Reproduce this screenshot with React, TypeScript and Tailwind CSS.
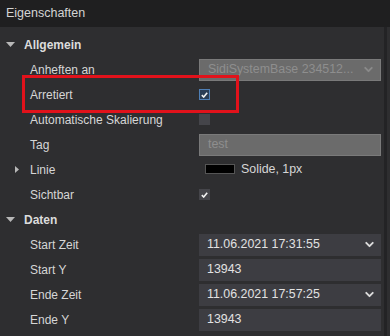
import { ChevronDown } from "lucide-react";
import type { ReactNode } from "react";

const font = { fontFamily: '"Liberation Sans", Arial, sans-serif' };

const Row = ({ label, indent = true, children }: { label: ReactNode; indent?: boolean; children?: ReactNode }) => (
  <div className="flex h-[25px] items-center">
    <div className={`w-[199px] shrink-0 text-[12px] text-[#d6d6d6] ${indent ? "pl-[30px]" : ""}`}>{label}</div>
    <div className="flex w-[182px] items-center">{children}</div>
  </div>
);

const Group = ({ label }: { label: string }) => (
  <div className="flex h-[25px] items-center pl-[6px]">
    <svg width="9" height="5" viewBox="0 0 9 5" className="mr-[9px]">
      <path d="M0 0h9L4.5 5z" fill="#b8b8b8" />
    </svg>
    <span className="text-[12px] font-bold text-[#dcdcdc]">{label}</span>
  </div>
);

const Check = ({ checked, blue }: { checked?: boolean; blue?: boolean }) => (
  <div
    className={`flex h-[11px] w-[11px] items-center justify-center ${
      blue ? "border border-[#4f7fb5] bg-[#2b3d55]" : "bg-[#45454a]"
    }`}
  >
    {checked && (
      <svg width="7" height="6" viewBox="0 0 7 6">
        <path d="M0.8 3.2L2.7 5L6.2 0.8" stroke="#f2f2f2" strokeWidth="1.6" fill="none" />
      </svg>
    )}
  </div>
);

const Field = ({ text, dropdown, disabled }: { text: string; dropdown?: boolean; disabled?: boolean }) => (
  <div
    className={`flex h-[22px] w-full items-center justify-between pl-[8px] pr-[5px] text-[12.4px] ${
      disabled ? "border border-[#7a7a7a] bg-[#6b6b6b] text-[#8e8e8e]" : "bg-[#3d3d42] text-[#e2e2e2]"
    }`}
  >
    <span>{text}</span>
    {dropdown && <ChevronDown size={13} strokeWidth={3.5} color={disabled ? "#8a8a8a" : "#dcdcdc"} />}
  </div>
);

export default function App() {
  return (
    <div style={font} className="relative h-[336px] w-[390px] overflow-hidden bg-[#2e2e30]">
      <div className="flex h-[27px] items-center bg-[#1f1f20] pl-[6px] text-[12.5px] text-[#d4d4d4]">Eigenschaften</div>
      <div className="flex">
        <div className="w-[384px] pt-[5px]">
          <Group label="Allgemein" />
          <Row label="Anheften an">
            <Field text="SidiSystemBase 234512..." dropdown disabled />
          </Row>
          <Row label="Arretiert">
            <Check checked blue />
          </Row>
          <Row label="Automatische Skalierung">
            <Check />
          </Row>
          <Row label="Tag">
            <Field text="test" disabled />
          </Row>
          <Row
            label={
              <span className="flex items-center">
                <svg width="4" height="7" viewBox="0 0 4 7" className="ml-[-15px] mr-[11px]">
                  <path d="M0 0L4 3.5L0 7z" fill="#b8b8b8" />
                </svg>
                Linie
              </span>
            }
          >
            <div className="ml-[6px] h-[10px] w-[30px] border border-[#555] bg-black" />
            <span className="ml-[6px] text-[12.4px] text-[#d6d6d6]">Solide, 1px</span>
          </Row>
          <Row label="Sichtbar">
            <Check checked />
          </Row>
          <Group label="Daten" />
          <Row label="Start Zeit">
            <Field text="11.06.2021 17:31:55" dropdown />
          </Row>
          <Row label="Start Y">
            <Field text="13943" />
          </Row>
          <Row label="Ende Zeit">
            <Field text="11.06.2021 17:57:25" dropdown />
          </Row>
          <Row label="Ende Y">
            <Field text="13943" />
          </Row>
        </div>
        <div className="h-[309px] w-[3px] bg-[#232325]" />
      </div>
      <div className="absolute left-[22px] top-[75px] h-[38px] w-[217px] border-[3px] border-[#e1121b]" />
    </div>
  );
}
